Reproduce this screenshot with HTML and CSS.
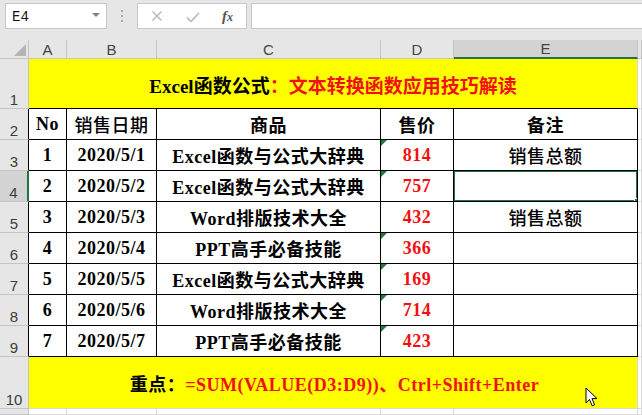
FILE: index.html
```html
<!DOCTYPE html>
<html lang="zh">
<head>
<meta charset="utf-8">
<title>Excel</title>
<link rel="stylesheet" href="styles.css">
</head>
<body>
<div class="app">
  <div class="fbar">
    <div class="namebox"><span class="ref">E4</span><span class="caret"></span></div>
    <div class="grip"><i></i><i></i><i></i></div>
    <div class="btns">
      <svg class="ic-x" width="12" height="10" viewBox="0 0 12 10"><path d="M1.5 0.5 L10.5 9.5 M10.5 0.5 L1.5 9.5" stroke="#b4b4b4" stroke-width="1.3" fill="none"/></svg>
      <svg class="ic-ok" width="14" height="11" viewBox="0 0 14 11"><path d="M1 5.5 L5 9.5 L13 1" stroke="#b4b4b4" stroke-width="1.5" fill="none"/></svg>
      <span class="fx">f<span class="fxx">x</span></span>
    </div>
    <div class="input"></div>
  </div>
  <div class="sheet">
    <div class="ch corner"><span class="tri"></span></div>
    <div class="ch">A</div>
    <div class="ch">B</div>
    <div class="ch">C</div>
    <div class="ch">D</div>
    <div class="ch sel">E</div>
    <div class="ch"></div>

    <div class="rh">1</div>
    <div class="merged title">Excel函数公式<span class="red">：文本转换函数应用技巧解读</span></div>
    <div class="f"></div>

    <div class="rh b">2</div>
    <div class="t">No</div>
    <div class="t light">销售日期</div>
    <div class="t">商品</div>
    <div class="t">售价</div>
    <div class="t">备注</div>
    <div class="f"></div>

    <div class="rh b">3</div>
    <div class="t">1</div>
    <div class="t">2020/5/1</div>
    <div class="t">Excel函数与公式大辞典</div>
    <div class="t red num flag">814</div>
    <div class="t light">销售总额</div>
    <div class="f"></div>

    <div class="rh b rsel">4</div>
    <div class="t">2</div>
    <div class="t">2020/5/2</div>
    <div class="t">Excel函数与公式大辞典</div>
    <div class="t red num flag">757</div>
    <div class="t active"><span class="handle"></span></div>
    <div class="f"></div>

    <div class="rh b">5</div>
    <div class="t">3</div>
    <div class="t">2020/5/3</div>
    <div class="t">Word排版技术大全</div>
    <div class="t red num">432</div>
    <div class="t light">销售总额</div>
    <div class="f"></div>

    <div class="rh b">6</div>
    <div class="t">4</div>
    <div class="t">2020/5/4</div>
    <div class="t">PPT高手必备技能</div>
    <div class="t red num flag">366</div>
    <div class="t"></div>
    <div class="f"></div>

    <div class="rh b">7</div>
    <div class="t">5</div>
    <div class="t">2020/5/5</div>
    <div class="t">Excel函数与公式大辞典</div>
    <div class="t red num flag">169</div>
    <div class="t"></div>
    <div class="f"></div>

    <div class="rh b">8</div>
    <div class="t">6</div>
    <div class="t">2020/5/6</div>
    <div class="t">Word排版技术大全</div>
    <div class="t red num flag">714</div>
    <div class="t"></div>
    <div class="f"></div>

    <div class="rh b">9</div>
    <div class="t">7</div>
    <div class="t">2020/5/7</div>
    <div class="t">PPT高手必备技能</div>
    <div class="t red num flag">423</div>
    <div class="t"></div>
    <div class="f"></div>

    <div class="rh">10</div>
    <div class="merged note">重点：<span class="red">=SUM(VALUE(D3:D9))、Ctrl+Shift+Enter</span></div>
    <div class="f"></div>

    <div class="rh"></div>
    <div class="g"></div>
    <div class="g"></div>
    <div class="g"></div>
    <div class="g"></div>
    <div class="g"></div>
    <div class="f"></div>

    <svg class="cursor" width="14" height="21" viewBox="0 0 14 21"><path d="M1 1 L1 16 L4.5 12.5 L7.2 18.8 L9.6 17.8 L7 11.6 L12 11.6 Z" fill="#fff" stroke="#000" stroke-width="1" stroke-linejoin="round"/></svg>
  </div>
</div>
</body>
</html>
```

FILE: styles.css
```css
html, body {
  margin: 0;
  padding: 0;
}
body {
  width: 642px;
  height: 415px;
  overflow: hidden;
  background: #e6e6e6;
  font-family: "Liberation Sans", Arial, sans-serif;
}
.app {
  display: flex;
  flex-direction: column;
  height: 415px;
}
.fbar {
  height: 40px;
  box-sizing: border-box;
  padding: 3px 0 0 5px;
  display: flex;
  align-items: flex-start;
  background: #e6e6e6;
}
.namebox {
  width: 102px;
  height: 26px;
  box-sizing: border-box;
  background: #fff;
  border: 1px solid #c6c6c6;
  display: flex;
  align-items: center;
  justify-content: space-between;
  padding: 0 6px 0 6px;
}
.ref {
  font-family: "Liberation Mono", monospace;
  font-size: 14px;
  color: #111;
  padding-top: 1px;
}
.caret {
  width: 0;
  height: 0;
  border-left: 4px solid transparent;
  border-right: 4px solid transparent;
  border-top: 4px solid #808080;
  margin-top: -3px;
}
.grip {
  width: 30px;
  height: 26px;
  display: flex;
  flex-direction: column;
  align-items: center;
  justify-content: center;
  gap: 3px;
}
.grip i {
  width: 2px;
  height: 2px;
  background: #a8a8a8;
}
.btns {
  width: 110px;
  height: 26px;
  box-sizing: border-box;
  background: #fff;
  border: 1px solid #c6c6c6;
  display: flex;
  align-items: center;
  padding-left: 13px;
}
.ic-x {
  margin-right: 23px;
}
.ic-ok {
  margin-right: 22px;
  margin-top: 2px;
}
.fx {
  font-family: "Liberation Serif", serif;
  font-style: italic;
  font-size: 15px;
  color: #555;
  font-weight: bold;
}
.fxx {
  font-size: 12px;
}
.input {
  flex: 1;
  height: 26px;
  margin-left: 4px;
  box-sizing: border-box;
  background: #fff;
  border: 1px solid #c6c6c6;
  border-right: none;
}
.sheet {
  flex: 1;
  position: relative;
  display: grid;
  grid-template-columns: 29px 38px 90px 224px 73px 184px 1fr;
  grid-template-rows: 19px 50px repeat(8, 31px) 52px 1fr;
  background: #fff;
}
.sheet > div {
  box-sizing: border-box;
  border-right: 1px solid #d9d9d9;
  border-bottom: 1px solid #d9d9d9;
  display: flex;
  align-items: center;
  justify-content: center;
  overflow: hidden;
  white-space: nowrap;
  position: relative;
}
.sheet > .ch {
  background: #e6e6e6;
  border-color: #c4c4c4;
  font-size: 15px;
  color: #444;
}
.sheet > .corner {
  align-items: flex-end;
  justify-content: flex-end;
  padding: 0 2px 2px 0;
}
.tri {
  width: 0;
  height: 0;
  border-left: 12px solid transparent;
  border-bottom: 12px solid #b5b5b5;
}
.sheet > .ch.sel {
  background: #d3d3d3;
  border-bottom: 2px solid #217346;
}
.sheet > .rh {
  background: #e6e6e6;
  border-color: #c4c4c4;
  font-size: 15px;
  color: #3c3c3c;
  align-items: flex-end;
  padding-bottom: 0;
  line-height: 17px;
}
.sheet > .rh.b {
  border-right-color: #000;
}
.sheet > .rh.rsel {
  background: #d3d3d3;
  border-right: 2px solid #217346;
}
.sheet > .merged {
  grid-column: span 5;
  background: #ffff00;
  font-family: "Liberation Serif", "Noto Sans CJK SC", serif;
  font-weight: bold;
  color: #000;
}
.sheet > .title {
  font-size: 19px;
  border-bottom-color: #000;
  padding-top: 1px;
}
.sheet > .note {
  font-size: 18px;
  letter-spacing: 0.5px;
  padding-left: 3px;
}
.sheet > .t {
  border-color: #000;
  font-family: "Liberation Serif", "Noto Sans CJK SC", serif;
  font-weight: bold;
  font-size: 18px;
  letter-spacing: 0.5px;
  color: #000;
}
.sheet > .t.light {
  font-weight: 500;
}
.red {
  color: #f21111;
}
.sheet > .t.red {
  color: #f21111;
}
.flag::before {
  content: "";
  position: absolute;
  top: 0;
  left: 0;
  width: 0;
  height: 0;
  border-top: 6px solid #1f7a3c;
  border-right: 6px solid transparent;
}
.active::after {
  content: "";
  position: absolute;
  top: -1px;
  left: -1px;
  right: -1px;
  bottom: -1px;
  border: 2px solid #217346;
}
.handle {
  position: absolute;
  right: -4px;
  bottom: -4px;
  width: 5px;
  height: 5px;
  background: #217346;
  border: 1px solid #fff;
  z-index: 2;
}
.cursor {
  position: absolute;
  left: 585px;
  top: 347px;
}
```
